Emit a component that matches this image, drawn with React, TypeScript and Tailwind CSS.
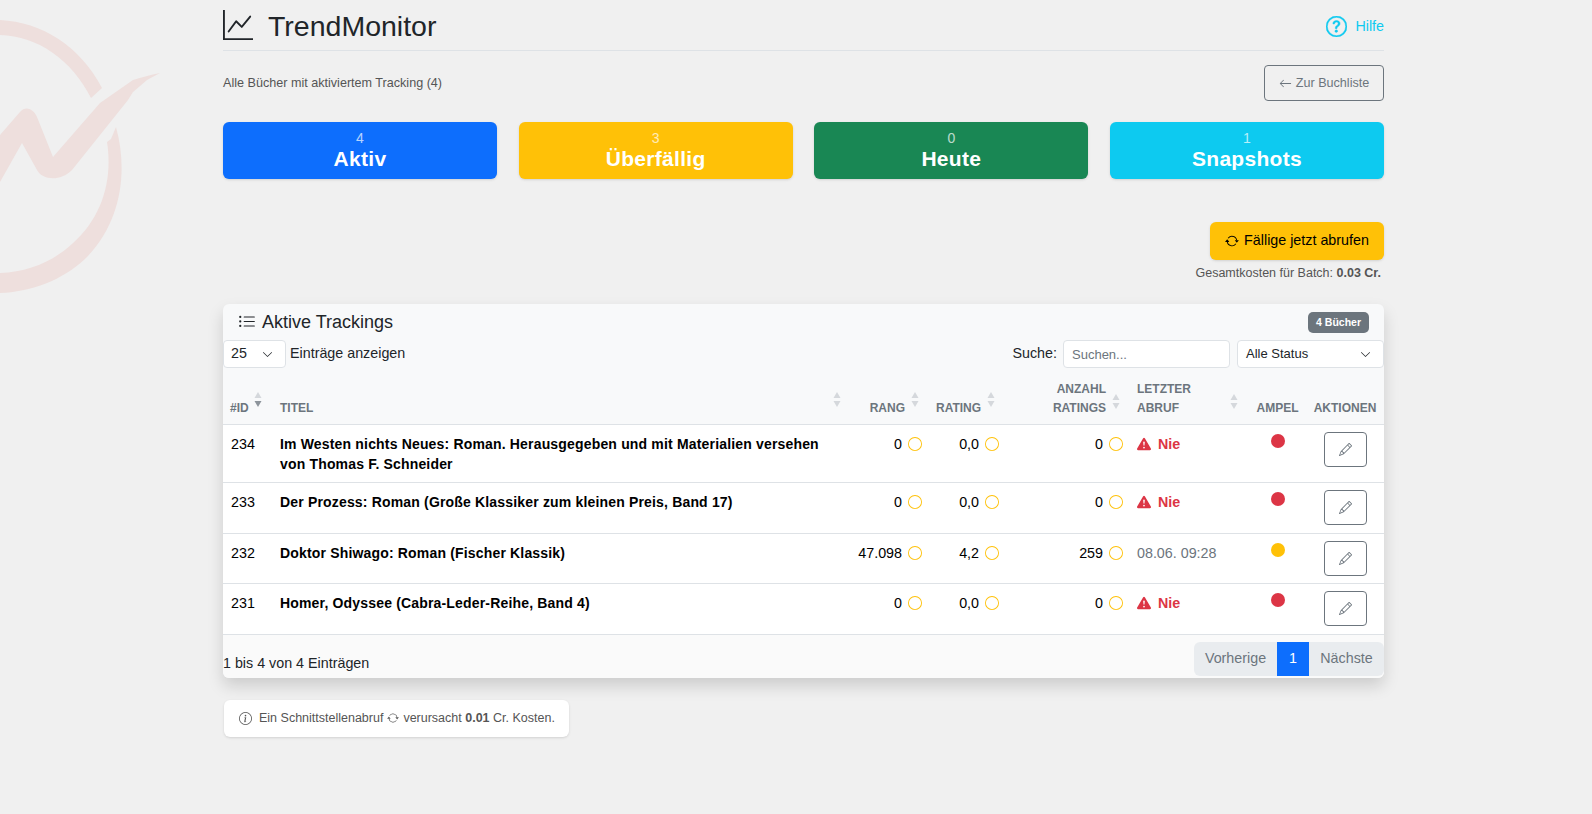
import {
  BsArrowLeft,
  BsArrowRepeat,
  BsChevronDown,
  BsCircle,
  BsExclamationTriangleFill,
  BsGraphUp,
  BsInfoCircle,
  BsListUl,
  BsPencil,
  BsQuestionCircle,
} from "react-icons/bs";

const STATS = [
  { value: "4", label: "Aktiv", bg: "bg-[#0d6efd]" },
  { value: "3", label: "Überfällig", bg: "bg-[#ffc107]" },
  { value: "0", label: "Heute", bg: "bg-[#198754]" },
  { value: "1", label: "Snapshots", bg: "bg-[#0dcaf0]" },
];

const ROWS = [
  { id: 234, title: "Im Westen nichts Neues: Roman. Herausgegeben und mit Materialien versehen von Thomas F. Schneider", rang: "0", rating: "0,0", count: "0", last: null, dot: "bg-[#dc3545]", h: "h-[58px]" },
  { id: 233, title: "Der Prozess: Roman (Große Klassiker zum kleinen Preis, Band 17)", rang: "0", rating: "0,0", count: "0", last: null, dot: "bg-[#dc3545]", h: "h-[51px]" },
  { id: 232, title: "Doktor Shiwago: Roman (Fischer Klassik)", rang: "47.098", rating: "4,2", count: "259", last: "08.06. 09:28", dot: "bg-[#ffc107]", h: "h-[50px]" },
  { id: 231, title: "Homer, Odyssee (Cabra-Leder-Reihe, Band 4)", rang: "0", rating: "0,0", count: "0", last: null, dot: "bg-[#dc3545]", h: "h-[51px]" },
];

function Watermark() {
  return (
    <svg className="absolute left-0 top-0" width="170" height="300" viewBox="0 0 170 300" fill="#eedfdd">
      <path d="M0 20C42 22 80 46 102 88L91 98C72 60 38 36 0 35Z" />
      <path d="M116 127C128 170 122 222 86 258C62 281 30 292 0 293V273C28 272 52 262 72 244C102 218 113 180 107 142L111 139Z" />
      <path d="M160 73C150 75 142 77 133 80L100 103L53 157L37 117C33 108 25 106 20 112L0 135V182L22 143L37 170C42 180 60 182 72 170L128 100L133 92L147 80Z" />
    </svg>
  );
}

function SortIcon({ active }: { active?: boolean }) {
  return (
    <svg width="8" height="15" viewBox="0 0 8 15" className="-mt-[7px] shrink-0">
      <path d="M4 0L7.5 6H.5Z" fill="#d5d8dc" />
      <path d="M4 15L7.5 9H.5Z" fill={active ? "#8d949b" : "#d5d8dc"} />
    </svg>
  );
}

function Metric({ value }: { value: string }) {
  return (
    <td className="pr-[7px] pt-[9px] align-top">
      <div className="flex items-center justify-end gap-[6px] leading-5">
        <span>{value}</span>
        <BsCircle className="text-[14px] text-[#ffc107]" />
      </div>
    </td>
  );
}

export default function App() {
  return (
    <div className="relative min-h-screen overflow-hidden bg-[#f0f0f0] font-['Liberation_Sans',Arial,sans-serif] text-[14.3px] text-[#212529]">
      <Watermark />
      <div className="relative ml-[223px] w-[1161px]">
        <header className="flex h-[51px] items-center justify-between border-b border-[#dee2e6]">
          <div className="flex items-center gap-[15px]">
            <BsGraphUp className="text-[30px]" />
            <h1 className="mt-[2px] text-[28.5px] leading-none">TrendMonitor</h1>
          </div>
          <div className="mt-[2px] flex items-center gap-[8px] text-[#0dcaf0]">
            <BsQuestionCircle className="stroke-[0.4px] text-[21px]" />
            <span className="mt-[2px]">Hilfe</span>
          </div>
        </header>

        <div className="mt-[14px] flex h-[36px] items-center justify-between">
          <p className="text-[12.6px] text-[#555]">Alle Bücher mit aktiviertem Tracking (4)</p>
          <button type="button" className="flex h-[36px] w-[120px] items-center justify-center gap-[4px] rounded border border-[#6c757d] text-[12.6px] text-[#6c757d]">
            <BsArrowLeft className="text-[13px]" />
            Zur Buchliste
          </button>
        </div>

        <div className="mt-[21px] grid grid-cols-4 gap-[21.67px]">
          {STATS.map((s) => (
            <div key={s.label} className={`flex h-[57px] flex-col items-center justify-center rounded-md text-white shadow-sm ${s.bg}`}>
              <span className="text-[14px] leading-[17px] opacity-70">{s.value}</span>
              <span className="text-[21px] font-bold leading-[24px] tracking-[0.3px]">{s.label}</span>
            </div>
          ))}
        </div>

        <div className="mt-[43px] flex justify-end">
          <button type="button" className="flex h-[38px] w-[174px] items-center justify-center gap-[5px] rounded-md bg-[#ffc107] text-black shadow-sm">
            <BsArrowRepeat className="text-[14px]" />
            Fällige jetzt abrufen
          </button>
        </div>
        <p className="mt-[5px] pr-[3px] text-right text-[12.5px] leading-[16px] text-[#555]">
          Gesamtkosten für Batch: <b>0.03 Cr.</b>
        </p>

        <section className="mt-[23px] overflow-hidden rounded-md bg-[#f8f9fa] shadow-[0_8px_16px_rgba(0,0,0,0.15)]">
          <div className="flex h-[36px] items-center justify-between px-[15px]">
            <div className="flex items-center gap-[6px] text-[18px]">
              <BsListUl className="text-[18px]" />
              Aktive Trackings
            </div>
            <span className="rounded-[5px] bg-[#6c757d] px-[8px] py-[4px] text-[10.5px] font-bold leading-[13px] text-white">4 Bücher</span>
          </div>

          <div className="flex h-[28px] items-center justify-between">
            <div className="flex items-center gap-[4px]">
              <div className="flex h-[28px] w-[63px] items-center justify-between rounded border border-[#dee2e6] bg-white pl-[7px] pr-[12px]">
                25
                <BsChevronDown className="text-[11px]" />
              </div>
              Einträge anzeigen
            </div>
            <div className="flex items-center">
              <span>Suche:</span>
              <input
                placeholder="Suchen..."
                className="ml-[6px] h-[28px] w-[167px] rounded border border-[#dee2e6] bg-white px-[8px] text-[13px] outline-none placeholder:text-[#6c757d]"
              />
              <div className="ml-[7px] flex h-[28px] w-[147px] items-center justify-between rounded border border-[#dee2e6] bg-white pl-[8px] pr-[12px] text-[13px]">
                Alle Status
                <BsChevronDown className="text-[11px]" />
              </div>
            </div>
          </div>

          <table className="w-full table-fixed border-collapse">
            <colgroup>
              <col className="w-[50px]" />
              <col className="w-[573px]" />
              <col className="w-[83px]" />
              <col className="w-[77px]" />
              <col className="w-[124px]" />
              <col className="w-[119px]" />
              <col className="w-[57px]" />
              <col className="w-[78px]" />
            </colgroup>
            <thead>
              <tr className="h-[56px] border-b border-[#dee2e6] text-[12px] font-bold uppercase leading-[19px] text-[#6c757d]">
                <th className="pb-[6px] pl-[7px] text-left align-bottom font-bold">
                  <div className="flex items-start gap-[5px]">#ID <SortIcon active /></div>
                </th>
                <th className="pb-[6px] pl-[7px] pr-[5px] align-bottom font-bold">
                  <div className="flex items-start justify-between">TITEL <SortIcon /></div>
                </th>
                <th className="pb-[6px] pr-[10px] align-bottom font-bold">
                  <div className="flex items-start justify-end gap-[6px]">RANG <SortIcon /></div>
                </th>
                <th className="pb-[6px] pl-[7px] pr-[11px] align-bottom font-bold">
                  <div className="flex items-start justify-between">RATING <SortIcon /></div>
                </th>
                <th className="pb-[6px] pr-[10px] text-right align-bottom font-bold">
                  <div className="flex items-end justify-end gap-[6px]">
                    <span>ANZAHL<br />RATINGS</span>
                    <span className="pb-[9px]"><SortIcon /></span>
                  </div>
                </th>
                <th className="pb-[6px] pl-[7px] pr-[11px] text-left align-bottom font-bold">
                  <div className="flex items-end justify-between">
                    <span>LETZTER<br />ABRUF</span>
                    <span className="pb-[9px]"><SortIcon /></span>
                  </div>
                </th>
                <th className="pb-[6px] text-center align-bottom font-bold">AMPEL</th>
                <th className="pb-[6px] text-center align-bottom font-bold">AKTIONEN</th>
              </tr>
            </thead>
            <tbody className="bg-white text-black">
              {ROWS.map((r) => (
                <tr key={r.id} className={`border-b border-[#dee2e6] ${r.h}`}>
                  <td className="pl-[8px] pt-[9px] align-top leading-5">{r.id}</td>
                  <td className="pl-[7px] pr-[20px] pt-[9px] align-top text-[14px] font-bold leading-5 tracking-[0.17px]">{r.title}</td>
                  <Metric value={r.rang} />
                  <Metric value={r.rating} />
                  <Metric value={r.count} />
                  <td className="pl-[7px] pt-[9px] align-top leading-5">
                    {r.last ? (
                      <span className="text-[#6c757d]">{r.last}</span>
                    ) : (
                      <span className="flex items-center gap-[7px] font-bold text-[#dc3545]">
                        <BsExclamationTriangleFill className="text-[14px]" />
                        Nie
                      </span>
                    )}
                  </td>
                  <td className="pt-[9px] align-top">
                    <span className={`mx-auto block h-[14px] w-[14px] rounded-full ${r.dot}`} />
                  </td>
                  <td className="pt-[7px] align-top">
                    <button type="button" className="mx-auto flex h-[35px] w-[43px] items-center justify-center rounded border border-[#6c757d] text-[#6c757d]">
                      <BsPencil className="text-[13px]" />
                    </button>
                  </td>
                </tr>
              ))}
            </tbody>
          </table>

          <div className="flex h-[43px] items-end justify-between bg-[#fafafa]">
            <span className="pb-[5px] leading-5">1 bis 4 von 4 Einträgen</span>
            <div className="mb-[2px] flex h-[34px] overflow-hidden rounded-md text-[#6c757d]">
              <span className="flex w-[83px] items-center justify-center bg-[#e9ecef]">Vorherige</span>
              <span className="flex w-[32px] items-center justify-center bg-[#0d6efd] text-white">1</span>
              <span className="flex w-[75px] items-center justify-center bg-[#e9ecef]">Nächste</span>
            </div>
          </div>
        </section>

        <div className="ml-px mt-[22px] flex h-[37px] w-[345px] items-center rounded-md bg-white pl-[15px] text-[12.5px] text-[#555] shadow-sm">
          <BsInfoCircle className="mr-[7px] text-[13px]" />
          <span>Ein Schnittstellenabruf</span>
          <BsArrowRepeat className="mx-[4px] text-[12px]" />
          <span>
            verursacht <b>0.01</b> Cr. Kosten.
          </span>
        </div>
      </div>
    </div>
  );
}
